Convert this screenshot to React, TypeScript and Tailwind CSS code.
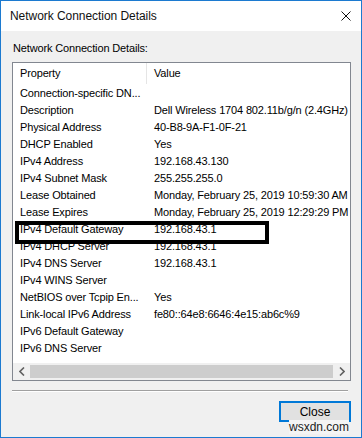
import React from 'react'

const rows: [string, string][] = [
  ['Connection-specific DN...', ''],
  ['Description', 'Dell Wireless 1704 802.11b/g/n (2.4GHz)'],
  ['Physical Address', '40-B8-9A-F1-0F-21'],
  ['DHCP Enabled', 'Yes'],
  ['IPv4 Address', '192.168.43.130'],
  ['IPv4 Subnet Mask', '255.255.255.0'],
  ['Lease Obtained', 'Monday, February 25, 2019 10:59:30 AM'],
  ['Lease Expires', 'Monday, February 25, 2019 12:29:29 PM'],
  ['IPv4 Default Gateway', '192.168.43.1'],
  ['IPv4 DHCP Server', '192.168.43.1'],
  ['IPv4 DNS Server', '192.168.43.1'],
  ['IPv4 WINS Server', ''],
  ['NetBIOS over Tcpip En...', 'Yes'],
  ['Link-local IPv6 Address', 'fe80::64e8:6646:4e15:ab6c%9'],
  ['IPv6 Default Gateway', ''],
  ['IPv6 DNS Server', ''],
]

export default function App() {
  return (
    <div
      className="relative w-[362px] h-[438px] border border-[#1c7ad0] bg-[#f0f0f0] flex flex-col text-black overflow-hidden"
      style={{ fontFamily: '"Liberation Sans", Arial, sans-serif' }}
    >
      {/* ── TITLE BAR ───────────────────────────── */}
      <div className="h-[30px] bg-white flex items-center justify-between pl-[9px] pr-[10px] shrink-0">
        <span className="text-[12px] tracking-[-0.05px] text-[#111]">Network Connection Details</span>
        <svg width="10" height="10" viewBox="0 0 10 10" className="mr-[0px]">
          <path d="M0.5 0.5 L9.5 9.5 M9.5 0.5 L0.5 9.5" stroke="#111" strokeWidth="1" />
        </svg>
      </div>

      {/* ── BODY ─────────────────────────────────── */}
      <div className="flex flex-col pl-[11px] pt-[10px] text-[11px] tracking-[-0.15px]">
        <div className="h-[21px] leading-[14px] pl-[1px]">Network Connection Details:</div>

        {/* List view */}
        <div className="w-[339px] h-[319px] border border-[#828790] bg-white flex flex-col overflow-hidden">
          <div className="h-[21px] flex items-center shrink-0">
            <div className="w-[134px] h-full pl-[7px] flex items-center border-r border-[#e5e5e5]">
              Property
            </div>
            <div className="pl-[7px]">Value</div>
          </div>
          <div className="flex flex-col pt-[1px] flex-1">
            {rows.map(([k, v]) => (
              <div key={k} className="h-[17px] flex items-center whitespace-nowrap">
                <div className="w-[134px] pl-[7px] shrink-0">{k}</div>
                <div className="pl-[7px] shrink-0">{v}</div>
              </div>
            ))}
          </div>
          {/* horizontal scrollbar */}
          <div className="h-[17px] bg-[#f0f0f0] flex items-center shrink-0">
            <div className="w-[17px] h-full flex items-center justify-center">
              <svg width="6" height="9" viewBox="0 0 6 9">
                <path d="M5 0.5 L1 4.5 L5 8.5" fill="none" stroke="#606060" strokeWidth="1.6" />
              </svg>
            </div>
            <div className="flex-1 h-[13px] bg-[#cdcdcd]" />
            <div className="w-[17px] h-full flex items-center justify-center">
              <svg width="6" height="9" viewBox="0 0 6 9">
                <path d="M1 0.5 L5 4.5 L1 8.5" fill="none" stroke="#606060" strokeWidth="1.6" />
              </svg>
            </div>
          </div>
        </div>

        {/* separator */}
        <div className="w-[336px] mt-[9px] border-t border-[#a0a0a0] border-b border-b-white" />

        {/* button row */}
        <div className="flex justify-end w-[339px] mt-[9px]">
          <button className="w-[72px] h-[21px] bg-[#e1e1e1] border-2 border-[#0078d7] text-[12px] tracking-normal flex items-center justify-center">
            Close
          </button>
        </div>
      </div>

      {/* highlight box around default gateway */}
      <div className="absolute left-[14px] top-[220px] w-[254px] h-[23px] border-[4px] border-black" />

      {/* watermark */}
      <div className="absolute left-[288px] top-[419px] text-[12px] leading-[14px] text-[#222] bg-[#f4f4f4]">
        wsxdn.com
      </div>
    </div>
  )
}
